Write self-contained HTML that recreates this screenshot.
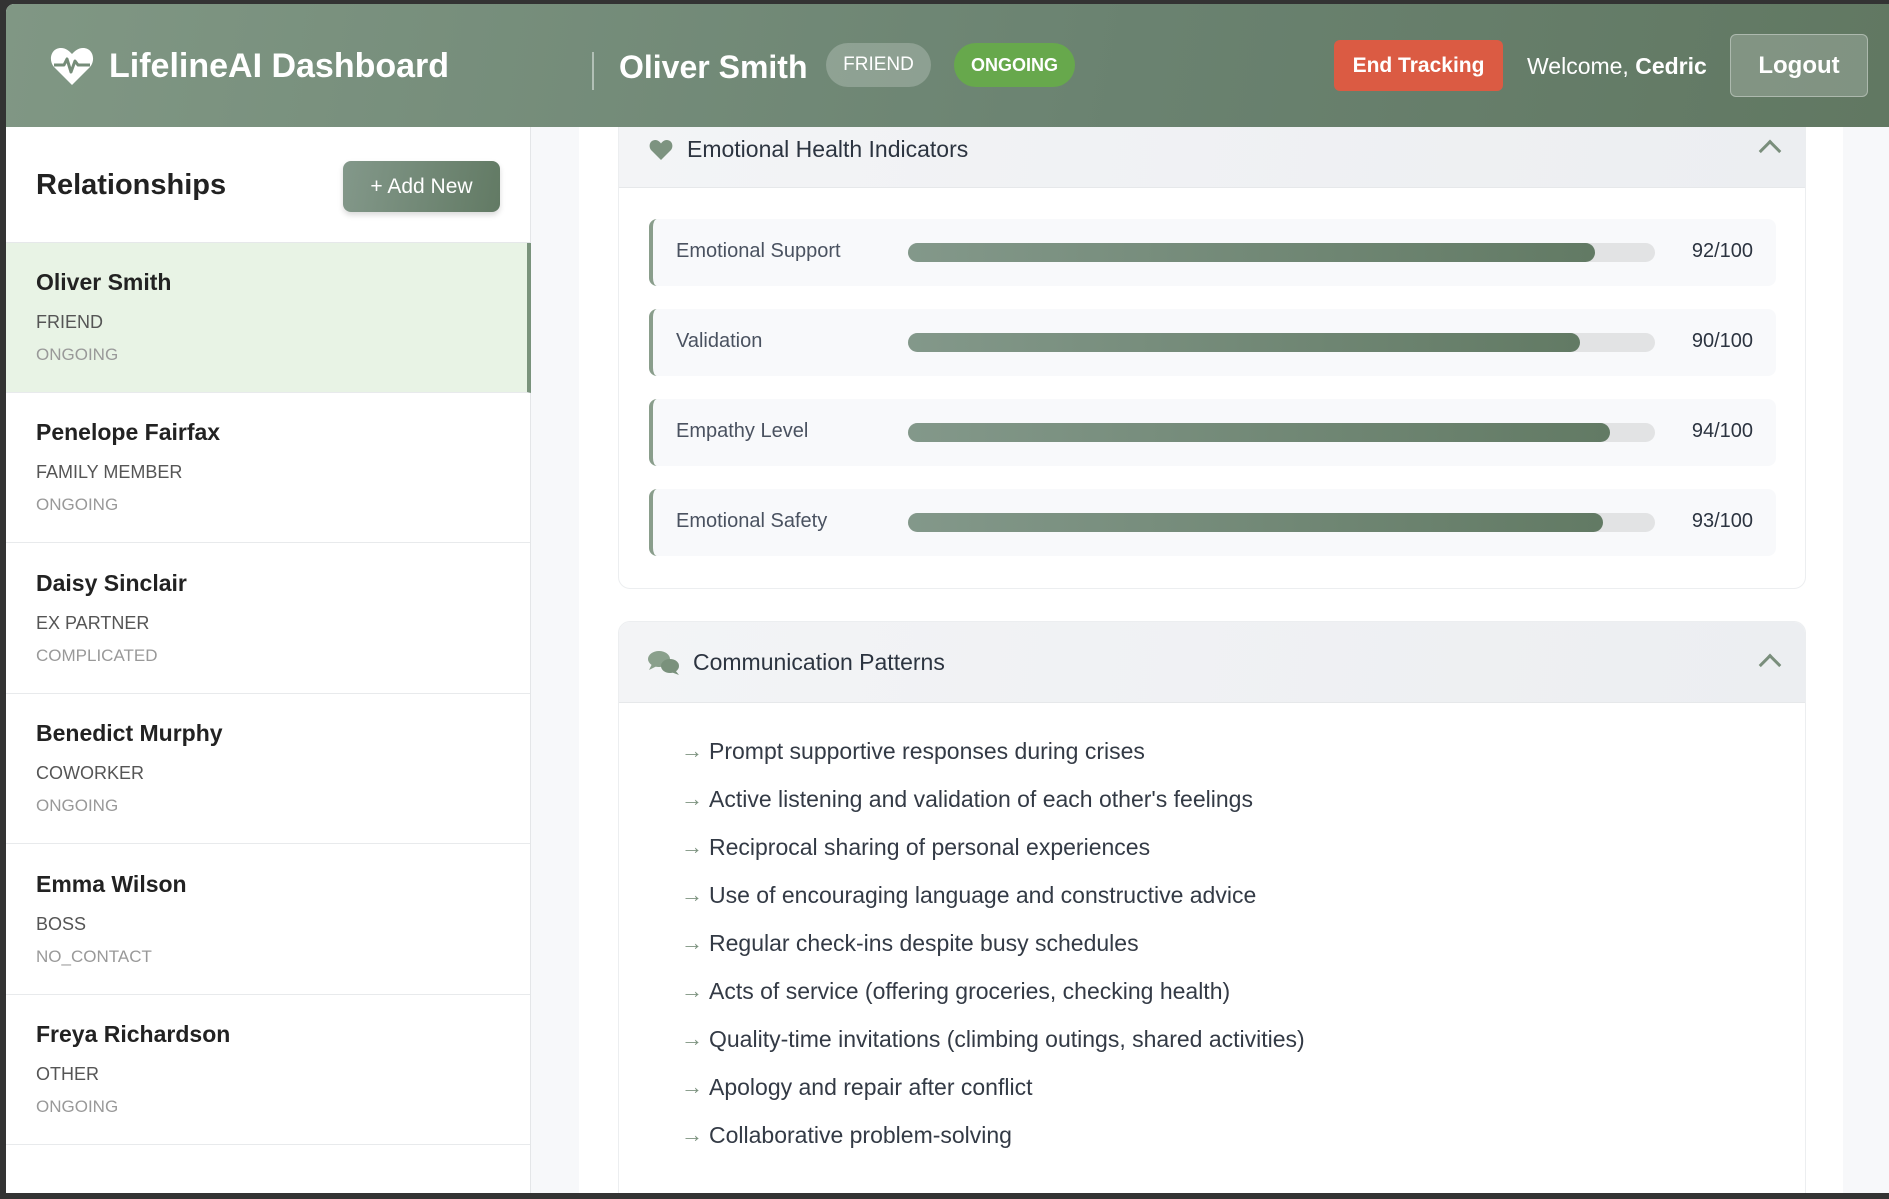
<!DOCTYPE html>
<html><head><meta charset="utf-8"><style>
*{box-sizing:border-box;margin:0;padding:0}
body{width:1889px;height:1199px;overflow:hidden;background:#333;font-family:"Liberation Sans",sans-serif;position:relative}
.app{position:absolute;left:6px;top:4px;width:1883px;height:1189px;background:#f7f8fa;overflow:hidden;border-radius:8px 0 0 0}
.hdr{position:absolute;left:0;top:0;width:100%;height:123px;background:linear-gradient(100deg,#809784,#6a8270 60%,#617862);color:#fff;z-index:5}
.hdr .t{position:absolute;font-weight:600}
.pill{position:absolute;top:39px;height:44px;border-radius:22px;display:flex;align-items:center;justify-content:center;font-size:19px}
.side{position:absolute;left:0;top:123px;width:525px;height:1070px;background:#fff;border-right:1px solid #e4e6e8}
.item{position:absolute;left:0;width:524px;height:150px;border-bottom:1px solid #e8eaec}
.item .n{position:absolute;left:30px;top:26px;font-size:23px;font-weight:600;color:#222}
.item .ty{position:absolute;left:30px;top:69px;font-size:18px;color:#555}
.item .st{position:absolute;left:30px;top:102px;font-size:17px;color:#999}
.col{position:absolute;left:573px;top:123px;width:1264px;height:1070px;background:#fff;overflow:hidden}
.card{position:absolute;left:39px;width:1188px;border:1px solid #eceef0;border-radius:12px;background:#fff;overflow:hidden}
.ch{position:absolute;left:0;top:0;width:100%;background:linear-gradient(100deg,#f3f4f6,#eceef1);border-bottom:1px solid #e6e8ea}
.ch .tt{position:absolute;font-size:23px;color:#2c3440}
.row{position:absolute;left:30px;width:1127px;height:67px;background:#f8f9fb;border-left:4px solid #8a9e8c;border-radius:8px}
.row .l{position:absolute;left:23px;top:21px;font-size:20px;color:#4a5260}
.row .b{position:absolute;left:255px;top:24px;width:747px;height:19px;background:#e2e3e4;border-radius:10px}
.row .f{height:100%;border-radius:10px;background:linear-gradient(90deg,#83988a,#627a64)}
.row .v{position:absolute;right:23px;top:21px;font-size:20px;color:#2c3440}
.li{position:absolute;left:62px;font-size:23px;color:#333a45}
.li span{color:#7d9380;font-size:22px;margin-right:6px;position:relative;top:-1px}
.chev{position:absolute;width:16px;height:16px;border-left:3px solid #7a8e7c;border-top:3px solid #7a8e7c;transform:rotate(45deg)}
</style></head><body>
<div class="app">
<div class="hdr">
<svg style="position:absolute;left:44px;top:42px" width="44" height="40" viewBox="0 0 44 40"><path d="M22 39 L4 21 C-2 14 1 2 11 2 C16 2 19 5 22 8 C25 5 28 2 33 2 C43 2 46 14 40 21 Z" fill="#fff"/><path d="M4 19 L14 19 L17 13 L21 26 L25 15 L28 19 L40 19" fill="none" stroke="#758c78" stroke-width="3" stroke-linejoin="round"/></svg>
<div class="t" style="left:103px;top:43px;font-size:34px">LifelineAI Dashboard</div>
<div style="position:absolute;left:586px;top:48px;width:2px;height:38px;background:rgba(255,255,255,.45)"></div>
<div class="t" style="left:613px;top:45px;font-size:32px">Oliver Smith</div>
<div class="pill" style="left:820px;width:105px;background:rgba(255,255,255,.22)">FRIEND</div>
<div class="pill" style="left:948px;width:121px;background:#67a84c;font-weight:600;font-size:18px">ONGOING</div>
<div style="position:absolute;left:1328px;top:36px;width:169px;height:51px;background:#db5b43;border-radius:6px;display:flex;align-items:center;justify-content:center;font-size:21px;font-weight:600">End Tracking</div>
<div style="position:absolute;left:1521px;top:49px;font-size:23px">Welcome, <b style="font-weight:600">Cedric</b></div>
<div style="position:absolute;left:1724px;top:30px;width:138px;height:63px;background:rgba(255,255,255,.2);border:1px solid rgba(255,255,255,.35);border-radius:6px;display:flex;align-items:center;justify-content:center;font-size:24px;font-weight:600">Logout</div>
</div>
<div class="side">
<div style="position:absolute;left:30px;top:42px;font-size:29px;font-weight:700;color:#222">Relationships</div>
<div style="position:absolute;left:337px;top:34px;width:157px;height:51px;border-radius:8px;background:linear-gradient(100deg,#83988a,#627a64);color:#fff;font-size:21px;display:flex;align-items:center;justify-content:center;box-shadow:0 3px 6px rgba(0,0,0,.15)">+ Add New</div>
<div style="position:absolute;left:0;top:115px;width:524px;height:1px;background:#e6e8ea"></div>
<div class="item" style="top:116px;background:#e8f3e5;border-right:4px solid #7a937c;width:525px"><div class="n">Oliver Smith</div><div class="ty">FRIEND</div><div class="st">ONGOING</div></div>
<div class="item" style="top:266px"><div class="n">Penelope Fairfax</div><div class="ty">FAMILY MEMBER</div><div class="st">ONGOING</div></div>
<div class="item" style="top:417px"><div class="n">Daisy Sinclair</div><div class="ty">EX PARTNER</div><div class="st">COMPLICATED</div></div>
<div class="item" style="top:567px"><div class="n">Benedict Murphy</div><div class="ty">COWORKER</div><div class="st">ONGOING</div></div>
<div class="item" style="top:718px"><div class="n">Emma Wilson</div><div class="ty">BOSS</div><div class="st">NO_CONTACT</div></div>
<div class="item" style="top:868px"><div class="n">Freya Richardson</div><div class="ty">OTHER</div><div class="st">ONGOING</div></div>
</div>
<div class="col">
<div class="card" style="top:-20px;height:482px">
<div class="ch" style="height:80px">
<svg style="position:absolute;left:30px;top:31px" width="24" height="22" viewBox="0 0 24 22"><path d="M12 21 L2 11 C-1 7 1 1 6.5 1 C9 1 11 3 12 4.5 C13 3 15 1 17.5 1 C23 1 25 7 22 11 Z" fill="#7d9380"/></svg>
<div class="tt" style="left:68px;top:28px">Emotional Health Indicators</div>
<div class="chev" style="left:1143px;top:35px"></div>
</div>
<div class="row" style="top:111px"><div class="l">Emotional Support</div><div class="b"><div class="f" style="width:92%"></div></div><div class="v">92/100</div></div>
<div class="row" style="top:201px"><div class="l">Validation</div><div class="b"><div class="f" style="width:90%"></div></div><div class="v">90/100</div></div>
<div class="row" style="top:291px"><div class="l">Empathy Level</div><div class="b"><div class="f" style="width:94%"></div></div><div class="v">94/100</div></div>
<div class="row" style="top:381px"><div class="l">Emotional Safety</div><div class="b"><div class="f" style="width:93%"></div></div><div class="v">93/100</div></div>
</div>
<div class="card" style="top:494px;height:600px">
<div class="ch" style="height:81px">
<svg style="position:absolute;left:29px;top:28px" width="32" height="26" viewBox="0 0 32 26"><ellipse cx="11" cy="9" rx="11" ry="8" fill="#8aa08c"/><path d="M4 14 L1 20 L9 16 Z" fill="#8aa08c"/><ellipse cx="22" cy="16" rx="9" ry="7" fill="#7a917c"/><path d="M27 20 L31 25 L23 22 Z" fill="#7a917c"/></svg>
<div class="tt" style="left:74px;top:27px">Communication Patterns</div>
<div class="chev" style="left:1143px;top:35px"></div>
</div>
<div class="li" style="top:116px"><span>→</span>Prompt supportive responses during crises</div>
<div class="li" style="top:164px"><span>→</span>Active listening and validation of each other's feelings</div>
<div class="li" style="top:212px"><span>→</span>Reciprocal sharing of personal experiences</div>
<div class="li" style="top:260px"><span>→</span>Use of encouraging language and constructive advice</div>
<div class="li" style="top:308px"><span>→</span>Regular check-ins despite busy schedules</div>
<div class="li" style="top:356px"><span>→</span>Acts of service (offering groceries, checking health)</div>
<div class="li" style="top:404px"><span>→</span>Quality-time invitations (climbing outings, shared activities)</div>
<div class="li" style="top:452px"><span>→</span>Apology and repair after conflict</div>
<div class="li" style="top:500px"><span>→</span>Collaborative problem-solving</div>
</div>
</div>
</div>
</body></html>
